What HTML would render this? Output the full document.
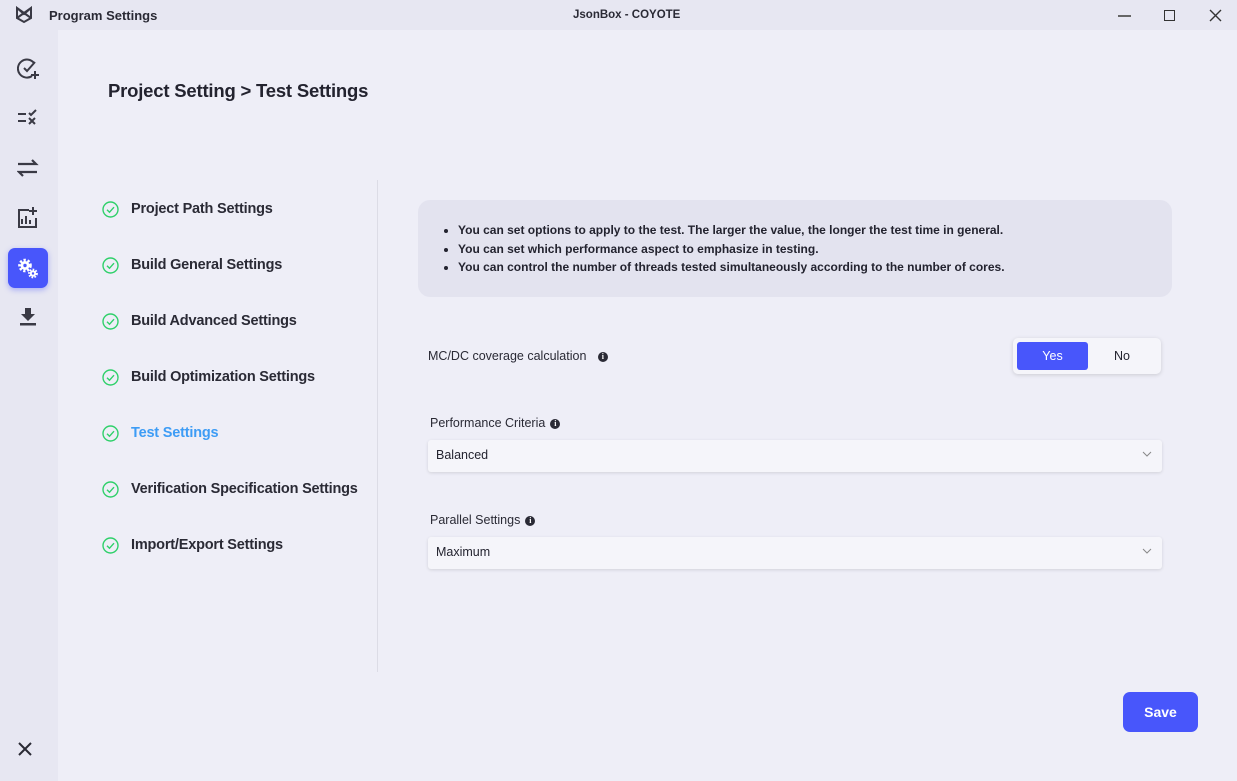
<!DOCTYPE html>
<html><head><meta charset="utf-8"><style>
*{margin:0;padding:0;box-sizing:border-box}
body{width:1237px;height:781px;overflow:hidden;background:#e7e7f2;font-family:"Liberation Sans",sans-serif;color:#23232f;position:relative}
.abs{position:absolute}
.title{top:8px;font-size:13px;font-weight:bold;color:#2a2a35}
.main{left:58px;top:30px;width:1179px;height:751px;background:#eeeef7}
.nav{left:131px;font-size:14.5px;font-weight:bold;color:#2a2a35;letter-spacing:-0.2px}
.chk{left:102px;width:17px;height:17px}
.info{left:418px;top:200px;width:754px;height:97px;background:#e3e3ef;border-radius:12px}
.info ul{margin:21px 0 0 40px;font-size:12px;font-weight:bold;line-height:18.5px;letter-spacing:0}
.lbl{font-size:12.5px;color:#2a2a35}
.i{display:inline-block;width:10px;height:10px;border-radius:50%;background:#2a2a35;color:#fff;font-size:8px;text-align:center;line-height:10px;font-weight:bold;vertical-align:middle;margin-left:5px;font-family:"Liberation Serif",serif}
.sel{left:428px;width:734px;height:32px;background:#f5f5fa;border-radius:3px;box-shadow:0 1px 3px rgba(0,0,0,.12);font-size:12.5px;padding:8px 0 0 8px}
.sel svg{position:absolute;right:10px;top:11px}
.side svg{position:absolute}
</style></head><body>
<svg class="abs" style="left:15px;top:6px" width="18" height="18" viewBox="0 0 18 18" fill="none" stroke="#3a3a45" stroke-width="2"><path d="M2 2 L9 8 L16 2 L16 12 L9 16 L2 12 Z M2 2 L16 12 M16 2 L2 12"/></svg>
<div class="abs title" style="left:49px">Program Settings</div>
<div class="abs title" style="left:573px;font-size:11.5px;top:9px">JsonBox - COYOTE</div>
<div class="abs" style="left:1118px;top:15px;width:13px;height:1.5px;background:#666"></div>
<div class="abs" style="left:1164px;top:10px;width:11px;height:11px;border:1.5px solid #333"></div>
<svg class="abs" style="left:1209px;top:9px" width="13" height="13" stroke="#333" stroke-width="1.4"><path d="M1 1L12 12M12 1L1 12"/></svg>

<div class="side">
<svg style="left:17px;top:58px" width="24" height="22" fill="none" stroke="#3a3a45" stroke-width="2"><path d="M17 5A9 9 0 1 0 15 18"/><path d="M7 10l3 3 8-9"/><path d="M18 13v8M14 17h8"/></svg>
<svg style="left:17px;top:109px" width="22" height="18" fill="none" stroke="#3a3a45" stroke-width="2"><path d="M1 5h8M1 12h8M12 4l2 2 5-5M12 9l6 6M18 9l-6 6"/></svg>
<svg style="left:17px;top:159px" width="22" height="18" fill="none" stroke="#3a3a45" stroke-width="2.2"><path d="M1 5h18l-4-4M20 13H2l4 4"/></svg>
<svg style="left:17px;top:207px" width="22" height="22" fill="none" stroke="#3a3a45" stroke-width="2"><path d="M12 3H2v17h17V11M5 17v-5M9 17v-8M13 17v-4M16 0v8M12 4h8"/></svg>
<div class="abs" style="left:8px;top:248px;width:40px;height:40px;background:#4856fb;border-radius:7px;box-shadow:0 2px 6px rgba(72,86,251,.4)"></div>
<svg style="left:17px;top:258px" width="22" height="22">
<g fill="none" stroke="#fff" stroke-width="3" stroke-dasharray="2.2 1.7"><circle cx="8" cy="7.5" r="5.3"/></g>
<circle cx="8" cy="7.5" r="4.5" fill="#fff"/><circle cx="8" cy="7.5" r="1.7" fill="#4856fb"/>
<g fill="none" stroke="#fff" stroke-width="2.2" stroke-dasharray="1.6 1.3"><circle cx="16" cy="15.5" r="3.8"/></g>
<circle cx="16" cy="15.5" r="3.2" fill="#fff"/><circle cx="16" cy="15.5" r="1.2" fill="#4856fb"/>
</svg>
<svg style="left:19px;top:308px" width="18" height="18" fill="#3a3a45"><path d="M6 0h6v6h4l-7 7-7-7h4z"/><rect x="1" y="15" width="16" height="2.5"/></svg>
<svg style="left:18px;top:742px" width="14" height="14" stroke="#2a2a35" stroke-width="2"><path d="M1 1L13 13M13 1L1 13"/></svg>
</div>

<div class="abs main"></div>
<div class="abs" style="left:108px;top:80px;font-size:18.5px;font-weight:bold;color:#23232f;letter-spacing:-0.2px">Project Setting &gt; Test Settings</div>
<div class="abs" style="left:377px;top:180px;width:1px;height:492px;background:#dcdce6"></div>

<svg class="abs chk" style="top:201px" viewBox="0 0 17 17" fill="none" stroke="#2fd06a" stroke-width="1.4"><circle cx="8.5" cy="8.5" r="7.5"/><path d="M5 8.7l2.5 2.5 4.5-5"/></svg>
<div class="abs nav" style="top:201px">Project Path Settings</div>
<svg class="abs chk" style="top:257px" viewBox="0 0 17 17" fill="none" stroke="#2fd06a" stroke-width="1.4"><circle cx="8.5" cy="8.5" r="7.5"/><path d="M5 8.7l2.5 2.5 4.5-5"/></svg>
<div class="abs nav" style="top:257px">Build General Settings</div>
<svg class="abs chk" style="top:313px" viewBox="0 0 17 17" fill="none" stroke="#2fd06a" stroke-width="1.4"><circle cx="8.5" cy="8.5" r="7.5"/><path d="M5 8.7l2.5 2.5 4.5-5"/></svg>
<div class="abs nav" style="top:313px">Build Advanced Settings</div>
<svg class="abs chk" style="top:369px" viewBox="0 0 17 17" fill="none" stroke="#2fd06a" stroke-width="1.4"><circle cx="8.5" cy="8.5" r="7.5"/><path d="M5 8.7l2.5 2.5 4.5-5"/></svg>
<div class="abs nav" style="top:369px">Build Optimization Settings</div>
<svg class="abs chk" style="top:425px" viewBox="0 0 17 17" fill="none" stroke="#2fd06a" stroke-width="1.4"><circle cx="8.5" cy="8.5" r="7.5"/><path d="M5 8.7l2.5 2.5 4.5-5"/></svg>
<div class="abs nav" style="top:425px;color:#3d9cf5">Test Settings</div>
<svg class="abs chk" style="top:481px" viewBox="0 0 17 17" fill="none" stroke="#2fd06a" stroke-width="1.4"><circle cx="8.5" cy="8.5" r="7.5"/><path d="M5 8.7l2.5 2.5 4.5-5"/></svg>
<div class="abs nav" style="top:481px">Verification Specification Settings</div>
<svg class="abs chk" style="top:537px" viewBox="0 0 17 17" fill="none" stroke="#2fd06a" stroke-width="1.4"><circle cx="8.5" cy="8.5" r="7.5"/><path d="M5 8.7l2.5 2.5 4.5-5"/></svg>
<div class="abs nav" style="top:537px">Import/Export Settings</div>

<div class="abs info"><ul>
<li>You can set options to apply to the test. The larger the value, the longer the test time in general.</li>
<li>You can set which performance aspect to emphasize in testing.</li>
<li>You can control the number of threads tested simultaneously according to the number of cores.</li>
</ul></div>

<div class="abs lbl" style="left:428px;top:349px">MC/DC coverage calculation <span class="i" style="margin-left:8px">i</span></div>
<div class="abs" style="left:1013px;top:338px;width:148px;height:36px;background:#f5f5fa;border-radius:5px;box-shadow:0 1px 4px rgba(0,0,0,.15)"></div>
<div class="abs" style="left:1017px;top:342px;width:71px;height:28px;background:#4856fb;border-radius:3px;color:#fff;font-size:12.5px;text-align:center;line-height:28px">Yes</div>
<div class="abs" style="left:1088px;top:342px;width:68px;height:28px;font-size:12.5px;text-align:center;line-height:28px">No</div>

<div class="abs lbl" style="left:430px;top:416px">Performance Criteria<span class="i">i</span></div>
<div class="abs sel" style="top:440px">Balanced<svg width="10" height="7" fill="none" stroke="#888" stroke-width="1"><path d="M1 1l4 4 4-4"/></svg></div>
<div class="abs lbl" style="left:430px;top:513px">Parallel Settings<span class="i">i</span></div>
<div class="abs sel" style="top:537px">Maximum<svg width="10" height="7" fill="none" stroke="#888" stroke-width="1"><path d="M1 1l4 4 4-4"/></svg></div>

<div class="abs" style="left:1123px;top:692px;width:75px;height:40px;background:#4856fb;border-radius:7px;color:#fff;font-size:14px;font-weight:bold;text-align:center;line-height:40px">Save</div>
</body></html>
